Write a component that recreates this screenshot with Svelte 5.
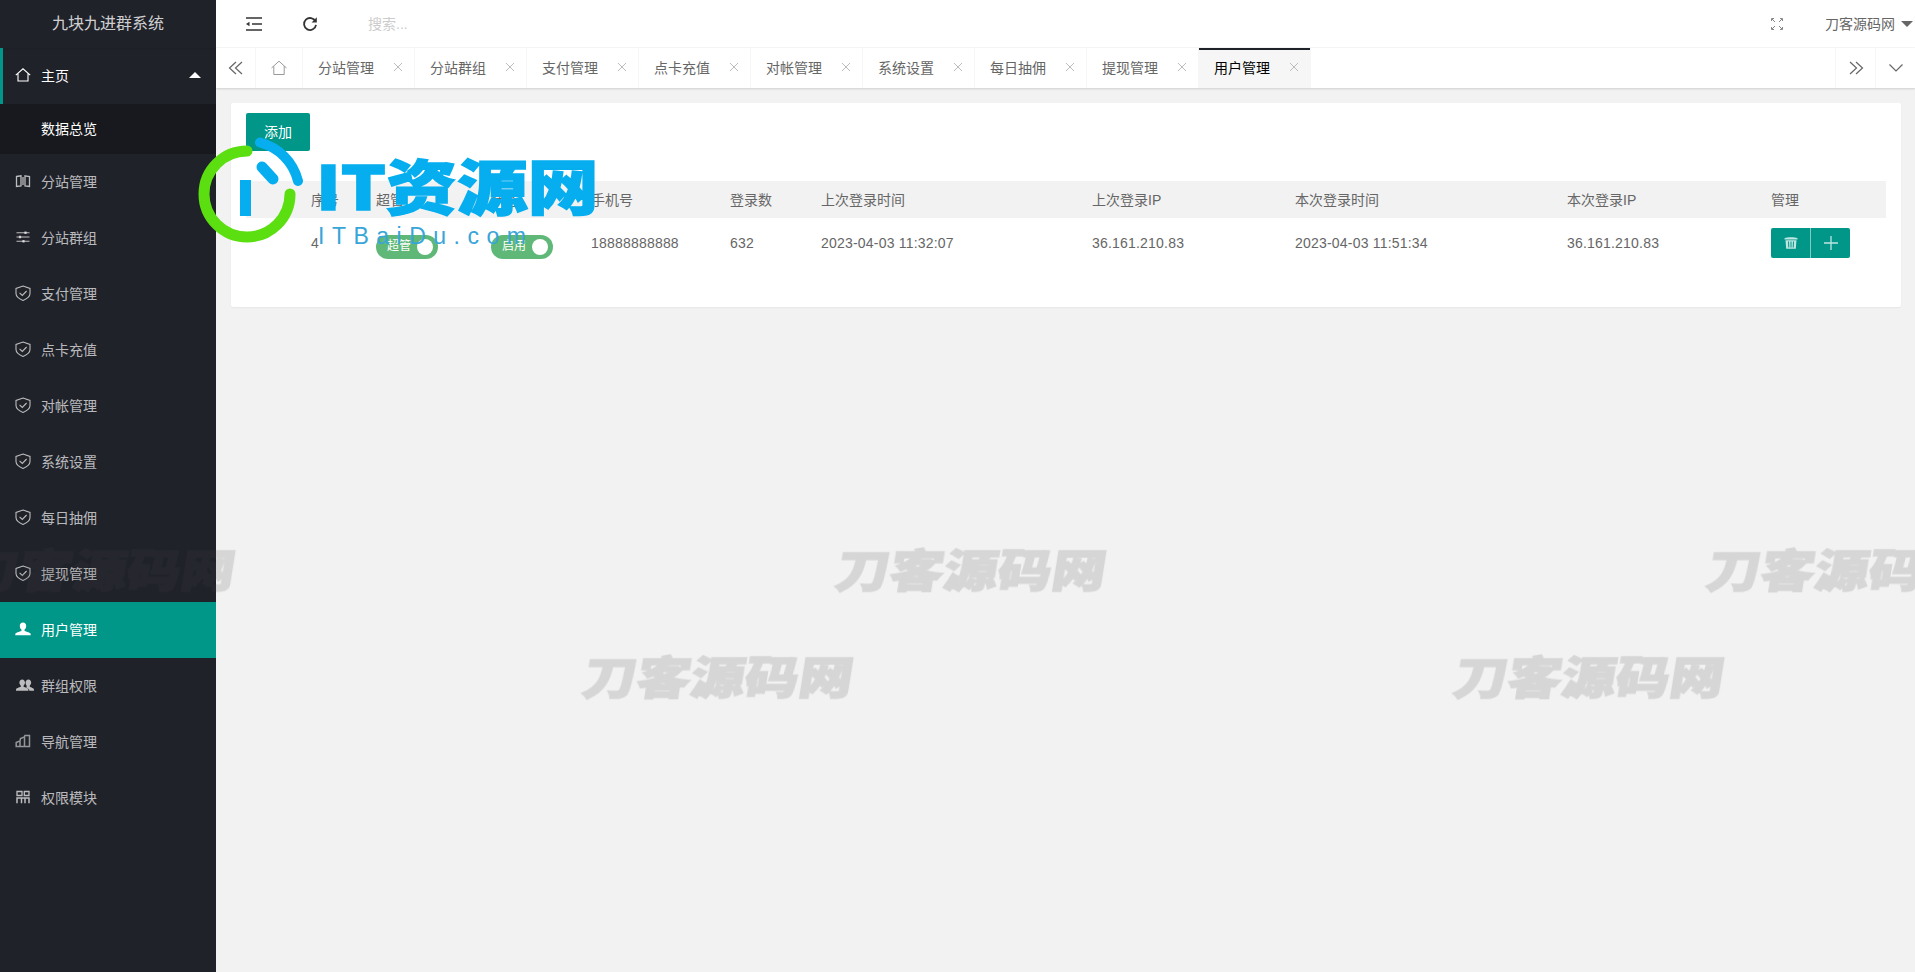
<script>
  const menu = [
    { name: '分站管理', icon: 'map' },
    { name: '分站群组', icon: 'sliders' },
    { name: '支付管理', icon: 'shield' },
    { name: '点卡充值', icon: 'shield' },
    { name: '对帐管理', icon: 'shield' },
    { name: '系统设置', icon: 'shield' },
    { name: '每日抽佣', icon: 'shield' },
    { name: '提现管理', icon: 'shield' },
    { name: '用户管理', icon: 'user', active: true },
    { name: '群组权限', icon: 'group' },
    { name: '导航管理', icon: 'nav' },
    { name: '权限模块', icon: 'module' }
  ];
  const tabs = ['分站管理', '分站群组', '支付管理', '点卡充值', '对帐管理', '系统设置', '每日抽佣', '提现管理', '用户管理'];
  const columns = [
    { label: '', w: 50 },
    { label: '序号', w: 65 },
    { label: '超管', w: 115 },
    { label: '状态', w: 100 },
    { label: '手机号', w: 139 },
    { label: '登录数', w: 91 },
    { label: '上次登录时间', w: 271 },
    { label: '上次登录IP', w: 203 },
    { label: '本次登录时间', w: 272 },
    { label: '本次登录IP', w: 204 },
    { label: '管理', w: 130 }
  ];
  const marks = [
    { x: -39, y: 538 }, { x: 832, y: 538 }, { x: 1703, y: 538 },
    { x: 579, y: 645 }, { x: 1450, y: 645 }
  ];
</script>

{#snippet icon(type)}
  <svg class="ico" class:wide={type === 'group'} viewBox="0 0 16 16" fill="none" stroke="currentColor" stroke-width="1.1">
    {#if type === 'home'}
      <path d="M.8 8.200 8 1.800 15.200 8.200M3 6.500V14H13V6.500" />
    {:else if type === 'map'}
      <path d="M1.500 3.500 6 2.800V13L1.500 13.500ZM10 2.800 14.500 3.500V13.500L10 13ZM8 4v8" stroke-width="1.300" />
    {:else if type === 'sliders'}
      <path d="M1.500 3.800H14.500M1.500 8H14.500M1.500 12.200H14.500" stroke-width="1.100" />
      <path d="M10.500 2.500v2.600M5 6.700v2.600M8.500 10.900v2.600" stroke-width="2.200" />
    {:else if type === 'shield'}
      <path d="M8 1 15 3.400V8.600C15 11.800 12 13.800 8 15.400 4 13.800 1 11.800 1 8.600V3.400Z" />
      <path d="M4.600 7.800 7.300 10.500 11.600 6" />
    {:else if type === 'user'}
      <path fill="currentColor" stroke="none" d="M8 1.500c2 0 3.200 1.500 3.200 3.500 0 1.600-.8 3-1.700 3.700v1c0 .7 5.300 1.300 6.200 3.100v1.500H.3v-1.500C1.200 11 6.500 10.400 6.500 9.700v-1C5.600 8 4.800 6.600 4.800 5c0-2 1.200-3.500 3.200-3.500Z" />
    {:else if type === 'group'}
      <path fill="currentColor" stroke="none" d="M5.500 3c1.500 0 2.500 1.200 2.500 2.800 0 1.200-.6 2.300-1.300 2.800v.8c0 .6 3.800 1 4.300 2.600v1H0v-1c.5-1.600 4.300-2 4.300-2.600v-.8C3.600 8.100 3 7 3 5.800 3 4.200 4 3 5.500 3Z" />
      <path fill="currentColor" stroke="none" d="M11 3c1.500 0 2.500 1.200 2.500 2.800 0 1.200-.6 2.300-1.300 2.800v.8c0 .6 3.300 1 3.800 2.600v1h-4c-.3-1.500-1.900-2.300-3-2.800.3-.2.500-.6.500-1V8.600C8.800 8.100 8.500 7 8.500 5.800 8.500 4.200 9.500 3 11 3Z" />
    {:else if type === 'nav'}
      <path d="M1.200 9.500 5 7.800V13.500H1.200ZM5 7.800 5.500 5.500 9.500 3.800V13.500H5M9.500 3.800 10 2.500 14.500 2.500V13.500H9.500" stroke-width="1.500" opacity=".75" />
    {:else if type === 'module'}
      <path d="M2 2.500H7V6.500H2ZM9.300 2.500H14V6.500H9.300Z" stroke-width="1.300" />
      <path d="M1.300 9H14.700M2 9V14.300M6.500 9V14.300M10 9V14.300M14 9V14.300" stroke-width="1.500" />
    {/if}
  </svg>
{/snippet}

<div class="layout">
  <aside class="side">
    <div class="logo">九块九进群系统</div>
    <ul class="menu">
      <li class="item open">
        {@render icon('home')}<span>主页</span><i class="caret-up"></i>
      </li>
      <li class="sub">数据总览</li>
      {#each menu as m}
        <li class="item" class:active={m.active}>
          {@render icon(m.icon)}<span>{m.name}</span>
        </li>
      {/each}
    </ul>
  </aside>

  <div class="main">
    <header class="top">
      <svg class="fold" viewBox="0 0 16 14" fill="none" stroke="#333" stroke-width="1.500">
        <path d="M0 1H16M6 7H16M0 13H16" />
        <path d="M0 7 3.500 4.800V9.200Z" fill="#333" stroke="none" />
      </svg>
      <svg class="refresh" viewBox="0 0 16 16" fill="none" stroke="#333" stroke-width="1.800">
        <path d="M13.500 5.500A6 6 0 1 0 14 8.800" />
        <path d="M14.800 1.200V6.400H9.600Z" fill="#333" stroke="none" />
      </svg>
      <span class="search">搜索...</span>
      <svg class="full" viewBox="0 0 12 12" fill="none" stroke="#888" stroke-width="1">
        <path d="M.5 3V.5H3M9 .5H11.500V3M.5 9V11.500H3M9 11.500H11.500V9M1 1 4 4M11 1 8 4M1 11 4 8M11 11 8 8" />
      </svg>
      <span class="user">刀客源码网</span>
      <i class="caret-down"></i>
    </header>

    <nav class="tabs">
      <span class="tab-btn">
        <svg viewBox="0 0 16 14" fill="none" stroke="#666" stroke-width="1.200"><path d="M8 1 1.500 7 8 13M14 1 7.500 7 14 13" /></svg>
      </span>
      <span class="tab-home">
        <svg viewBox="0 0 16 16" fill="none" stroke="#999" stroke-width="1"><path d="M.5 8 8 1.200 15.500 8M2.800 6.200V14.500H13.200V6.200" /></svg>
      </span>
      {#each tabs as t, i}
        <span class="tab" class:current={i === tabs.length - 1}>
          {t}
          <svg class="close" viewBox="0 0 10 10" stroke="#bbb" stroke-width="1"><path d="M1 1 9 9M9 1 1 9" /></svg>
        </span>
      {/each}
      <span class="tab-fill"></span>
      <span class="tab-btn edge">
        <svg viewBox="0 0 16 14" fill="none" stroke="#666" stroke-width="1.200"><path d="M2 1 8.500 7 2 13M8 1 14.500 7 8 13" /></svg>
      </span>
      <span class="tab-btn edge">
        <svg viewBox="0 0 16 14" fill="none" stroke="#666" stroke-width="1.200"><path d="M1.500 3.500 8 10 14.500 3.500" /></svg>
      </span>
    </nav>

    <main class="body">
      <section class="card">
        <button class="add">添加</button>
        <table>
          <colgroup>
            {#each columns as c}<col style="width:{c.w}px" />{/each}
          </colgroup>
          <thead>
            <tr>{#each columns as c}<th>{c.label}</th>{/each}</tr>
          </thead>
          <tbody>
            <tr>
              <td></td>
              <td>4</td>
              <td><span class="switch">超管<i></i></span></td>
              <td><span class="switch">启用<i></i></span></td>
              <td>18888888888</td>
              <td>632</td>
              <td>2023-04-03 11:32:07</td>
              <td>36.161.210.83</td>
              <td>2023-04-03 11:51:34</td>
              <td>36.161.210.83</td>
              <td>
                <span class="ops">
                  <span class="op">
                    <svg viewBox="0 0 14 14" fill="#bfe6e1"><path d="M.5 2.200C3 .8 11 .8 13.500 2.200V3.400H.5ZM1.500 4.300H12.500L11.800 12.800H2.200ZM4 5.500 4.300 11.500H5.300L5 5.500ZM6.500 5.500V11.500H7.500V5.500ZM9 5.500 8.700 11.500H9.700L10 5.500Z" fill-rule="evenodd" /></svg>
                  </span>
                  <span class="op">
                    <svg viewBox="0 0 14 14" stroke="#bfe6e1" stroke-width="1.300"><path d="M7 0V14M0 7H14" /></svg>
                  </span>
                </span>
              </td>
            </tr>
          </tbody>
        </table>
      </section>
    </main>
  </div>

  <!-- overlays stamped over the page -->
  {#each marks as m}
    <span class="mark" style="left:{m.x}px;top:{m.y}px">刀客源码网</span>
  {/each}

  <div class="brand">
    <svg width="120" height="120" viewBox="190 130 120 120" fill="none" stroke-linecap="round">
      <path d="M247 151A43 43 0 1 0 290 194" stroke="#5bdf11" stroke-width="11" />
      <path d="M260 142.500A53 53 0 0 1 298 181" stroke="#06aeef" stroke-width="10" />
      <path d="M262 167 273 179" stroke="#06aeef" stroke-width="11" />
      <path d="M245.500 180V216" stroke="#06aeef" stroke-width="11" stroke-linecap="butt" />
    </svg>
    <div class="brand-text">
      <div class="brand-name">IT资源网</div>
      <div class="brand-url">ITBaiDu.com</div>
    </div>
  </div>
</div>

<style>
  :global(body) {
    margin: 0;
    overflow: hidden;
  }
  .layout {
    position: relative;
    display: grid;
    grid-template-columns: 216px 1fr;
    height: 972px;
    overflow: hidden;
    font-family: "Liberation Sans", "Noto Sans CJK SC", sans-serif;
    font-size: 14px;
    color: #666;
  }
  .side {
    background: #20222a;
  }
  .logo {
    height: 48px;
    line-height: 48px;
    text-align: center;
    font-size: 16px;
    color: rgba(255, 255, 255, 0.8);
    box-shadow: 0 1px 2px rgba(0, 0, 0, 0.1);
  }
  .menu {
    list-style: none;
    margin: 0;
    padding: 0;
  }
  .item {
    display: flex;
    align-items: center;
    box-sizing: border-box;
    height: 56px;
    padding: 0 0 2px 15px;
    color: rgba(255, 255, 255, 0.7);
  }
  .item span {
    margin-left: 10px;
  }
  .ico {
    width: 16px;
    height: 16px;
    flex: none;
  }
  .ico.wide {
    width: 18px;
    height: 18px;
    margin-left: 1px;
    margin-right: -3px;
  }
  .item.open {
    color: #fff;
    box-shadow: inset 3px 0 0 #009688;
  }
  .item.active {
    background: #009688;
    color: #fff;
  }
  .sub {
    height: 50px;
    line-height: 50px;
    padding-left: 41px;
    color: #fff;
    background: #18191e;
  }
  .caret-up {
    margin-left: auto;
    margin-right: 15px;
    border: 6px solid transparent;
    border-top: 0;
    border-bottom-color: #fff;
  }
  .main {
    display: flex;
    flex-direction: column;
    min-width: 0;
    background: #f2f2f2;
  }
  .top {
    display: flex;
    align-items: center;
    height: 48px;
    flex: none;
    box-sizing: border-box;
    background: #fff;
    border-bottom: 1px solid #f6f6f6;
    padding-right: 2px;
  }
  .fold {
    width: 16px;
    height: 14px;
    margin-left: 30px;
  }
  .refresh {
    width: 16px;
    height: 16px;
    margin-left: 40px;
  }
  .search {
    margin-left: 50px;
    padding-bottom: 2px;
    color: #ccc;
    font-size: 14px;
  }
  .full {
    width: 12px;
    height: 12px;
    margin-left: auto;
  }
  .user {
    margin-left: 42px;
    padding-bottom: 2px;
    color: #666;
  }
  .caret-down {
    margin-left: 6px;
    border: 6px solid transparent;
    border-bottom: 0;
    border-top-color: #666;
  }
  .tabs {
    display: flex;
    height: 40px;
    flex: none;
    box-sizing: border-box;
    background: #fff;
    box-shadow: 0 1px 2px rgba(0, 0, 0, 0.15);
    position: relative;
  }
  .tab-btn {
    display: flex;
    align-items: center;
    justify-content: center;
    width: 40px;
    box-sizing: border-box;
    border-right: 1px solid #f6f6f6;
  }
  .tab-btn svg {
    width: 16px;
    height: 14px;
  }
  .tab-btn.edge {
    border-right: 0;
    border-left: 1px solid #f6f6f6;
  }
  .tab-home {
    display: flex;
    align-items: center;
    justify-content: center;
    width: 47px;
    box-sizing: border-box;
    border-right: 1px solid #f6f6f6;
  }
  .tab-home svg {
    width: 16px;
    height: 16px;
  }
  .tab {
    display: flex;
    align-items: center;
    width: 112px;
    box-sizing: border-box;
    padding: 0 0 2px 15px;
    border-right: 1px solid #f6f6f6;
    color: #666;
  }
  .tab.current {
    background: #f6f6f6;
    color: #000;
    box-shadow: inset 0 2px 0 #20222a;
  }
  .close {
    width: 10px;
    height: 10px;
    margin-left: 19px;
  }
  .tab-fill {
    flex: 1;
  }
  .body {
    padding: 15px 14px 0 15px;
  }
  .card {
    box-sizing: border-box;
    height: 204px;
    padding: 10px 15px;
    background: #fff;
    border-radius: 2px;
    box-shadow: 0 1px 2px rgba(0, 0, 0, 0.05);
  }
  .add {
    display: block;
    width: 64px;
    height: 38px;
    margin-bottom: 30px;
    padding: 0 0 2px;
    border: 0;
    border-radius: 2px;
    background: #009688;
    color: #fff;
    font: inherit;
  }
  table {
    width: 1640px;
    table-layout: fixed;
    border-collapse: collapse;
  }
  th {
    height: 35px;
    padding: 0 15px 2px;
    background: #f2f2f2;
    font-weight: 400;
    text-align: left;
  }
  td {
    height: 50px;
    padding: 0 15px;
    vertical-align: middle;
    letter-spacing: 0.2px;
  }
  .switch {
    position: relative;
    display: block;
    box-sizing: border-box;
    width: 62px;
    height: 24px;
    margin-top: 8px;
    padding-left: 11px;
    border-radius: 12px;
    background: #5fb878;
    color: #fff;
    font-size: 12px;
    line-height: 23px;
    letter-spacing: 0;
  }
  .switch i {
    position: absolute;
    top: 4px;
    right: 5px;
    width: 16px;
    height: 16px;
    border-radius: 50%;
    background: #fff;
  }
  .ops {
    display: flex;
    width: 79px;
    height: 30px;
    border-radius: 2px;
    overflow: hidden;
    background: #009688;
  }
  .op {
    display: flex;
    flex: 1;
    align-items: center;
    justify-content: center;
  }
  .op + .op {
    border-left: 1px solid #80cbc4;
  }
  .op svg {
    width: 14px;
    height: 14px;
  }
  .mark {
    position: absolute;
    font-family: "Noto Sans CJK SC", sans-serif;
    font-size: 45px;
    line-height: 60px;
    font-weight: 900;
    white-space: nowrap;
    color: #464646;
    -webkit-text-stroke: 1.500px #464646;
    opacity: 0.156;
    transform: skewX(-9deg) scaleX(1.2);
    transform-origin: left bottom;
    filter: blur(0.4px);
    pointer-events: none;
  }
  .brand {
    position: absolute;
    left: 190px;
    top: 130px;
    width: 420px;
    height: 120px;
    pointer-events: none;
  }
  .brand svg {
    position: absolute;
    left: 0;
    top: 0;
  }
  .brand-text {
    position: absolute;
    left: 126px;
    top: 16px;
  }
  .brand-name {
    font-family: "Noto Sans CJK SC", sans-serif;
    font-size: 60px;
    line-height: 76px;
    font-weight: 900;
    color: #06aeef;
    white-space: nowrap;
    -webkit-text-stroke: 1.500px #06aeef;
    transform: scaleX(1.18);
    transform-origin: left top;
  }
  .brand-url {
    margin-left: 2px;
    font-family: "Liberation Sans", sans-serif;
    font-size: 23px;
    line-height: 28px;
    letter-spacing: 7.500px;
    color: #38a5d8;
    white-space: nowrap;
  }
</style>
